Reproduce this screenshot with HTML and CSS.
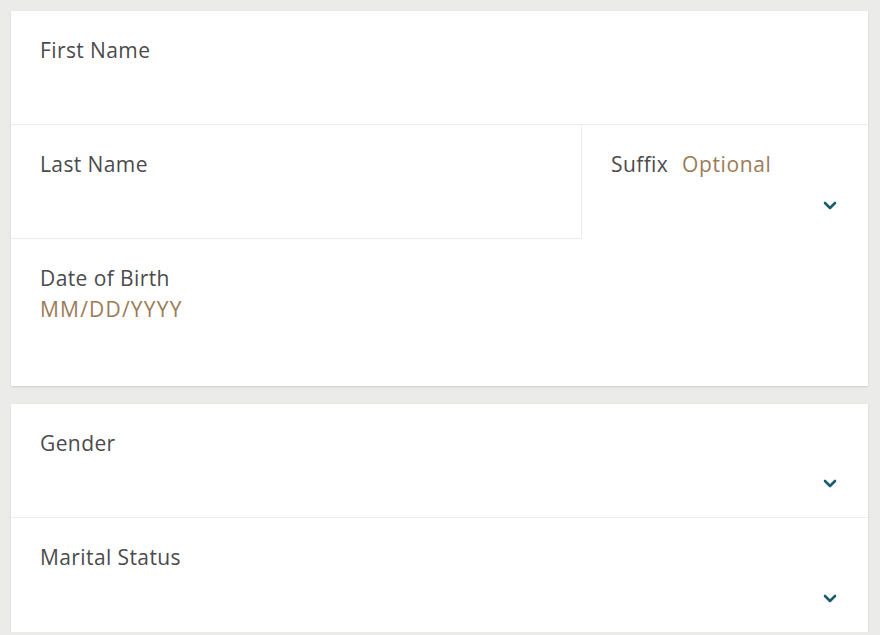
FILE: index.html
```html
<!DOCTYPE html>
<html lang="en">
<head>
  <meta charset="UTF-8" />
  <meta name="viewport" content="width=device-width, initial-scale=1.0"/>
  <title>Personal Details</title>
  <link rel="stylesheet" href="styles.css">
</head>
<body>
  <div class="form">
    <div class="card">
      <div class="field">
        <label class="label">First Name</label>
      </div>
      <div class="row">
        <div class="field grow">
          <label class="label">Last Name</label>
        </div>
        <div class="field suffix">
          <label class="label">Suffix <span class="hint">Optional</span></label>
          <svg class="chevron" width="14" height="9" viewBox="0 0 14 9"><path d="M2 2l5 5 5-5" fill="none" stroke="#1b5b6e" stroke-width="2.6" stroke-linecap="round" stroke-linejoin="round"/></svg>
        </div>
      </div>
      <div class="field tall">
        <label class="label">Date of Birth</label>
        <div class="hint date">MM/DD/YYYY</div>
      </div>
    </div>

    <div class="card">
      <div class="field select">
        <label class="label">Gender</label>
        <svg class="chevron" width="14" height="9" viewBox="0 0 14 9"><path d="M2 2l5 5 5-5" fill="none" stroke="#1b5b6e" stroke-width="2.6" stroke-linecap="round" stroke-linejoin="round"/></svg>
      </div>
      <div class="field select">
        <label class="label">Marital Status</label>
        <svg class="chevron" width="14" height="9" viewBox="0 0 14 9"><path d="M2 2l5 5 5-5" fill="none" stroke="#1b5b6e" stroke-width="2.6" stroke-linecap="round" stroke-linejoin="round"/></svg>
      </div>
    </div>
  </div>
</body>
</html>
```

FILE: styles.css
```css
* {
  margin: 0;
  padding: 0;
  box-sizing: border-box;
  font-family: 'Open Sans', sans-serif;
}

body {
  background-color: #ebebea;
  padding: 11px 12px 0 11px;
}

.form {
  display: flex;
  flex-direction: column;
  gap: 18px;
}

.card {
  background-color: #fff;
  box-shadow: 0 1px 2px rgba(0, 0, 0, 0.12);
}

.row {
  display: flex;
}

.field {
  position: relative;
  height: 114px;
  padding: 24px 29px 0;
  border-bottom: 1px solid #ececec;
}

.card .field:last-child {
  border-bottom: none;
}

.row .field {
  border-bottom: 1px solid #ececec;
}

.grow {
  flex: 1;
}

.suffix {
  width: 287px;
  border-left: 1px solid #ececec;
}

.tall {
  height: 147px;
}

.label {
  display: block;
  font-size: 21px;
  line-height: 31px;
  letter-spacing: 0.4px;
  color: #4b4b4d;
}

.hint {
  font-size: 21px;
  line-height: 31px;
  letter-spacing: 0.6px;
  color: #9b7b56;
}

.date {
  letter-spacing: 1.2px;
}

.label .hint {
  margin-left: 8px;
}

.chevron {
  position: absolute;
  right: 31px;
  bottom: 29px;
}
```
